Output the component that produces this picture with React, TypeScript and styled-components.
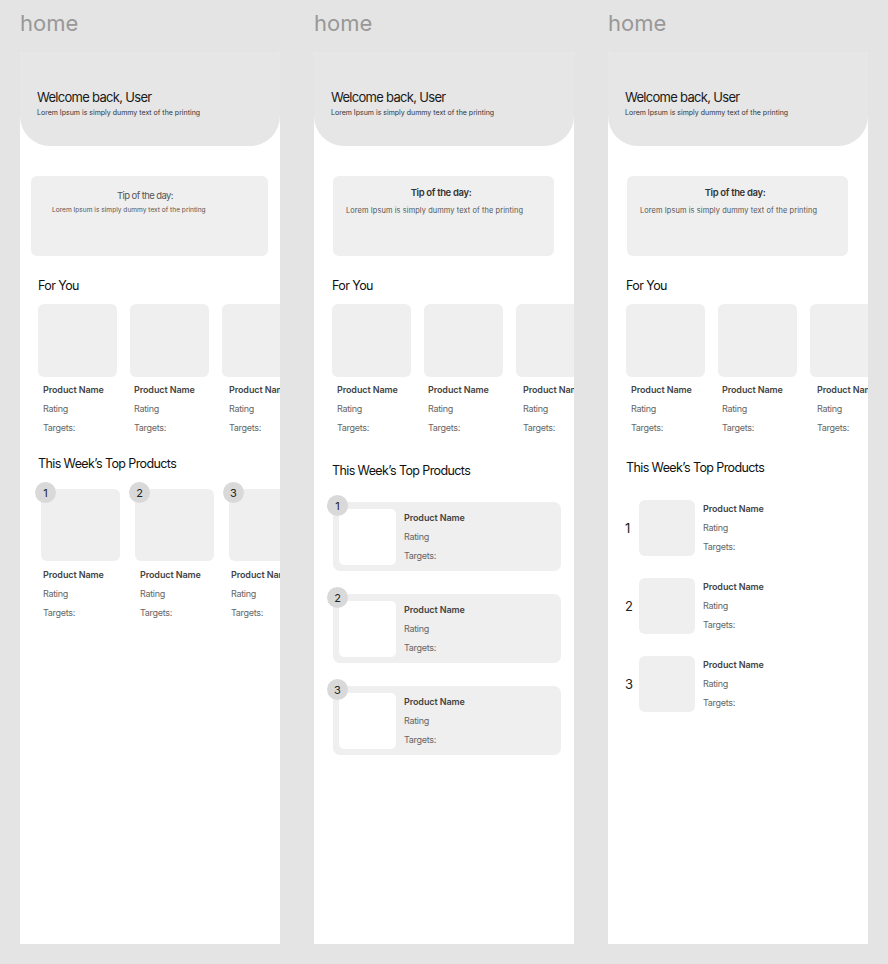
import React from 'react';
import styled, { createGlobalStyle } from 'styled-components';

type Variant = 'grid' | 'cards' | 'list';

const products = [
  { rank: 1, inset: 5 },
  { rank: 2, inset: 4 },
  { rank: 3, inset: 7 },
];

const GlobalStyle = createGlobalStyle`
  body {
    margin: 0;
    background: #e4e4e4;
    font-family: Inter, 'Noto Sans', sans-serif;
  }
`;

const Page = styled.div`
  display: flex;
  gap: 34px;
  padding: 0 20px;
`;

const Column = styled.div`
  display: flex;
  flex-direction: column;
  width: 260px;
`;

const Label = styled.div`
  height: 52px;
  box-sizing: border-box;
  padding-top: 10px;
  font-size: 22px;
  line-height: 27px;
  color: #989898;
`;

const Frame = styled.div`
  width: 260px;
  height: 892px;
  background: #fff;
  overflow: hidden;
  border-radius: 3px 3px 0 0;
`;

const Header = styled.header`
  height: 94px;
  box-sizing: border-box;
  padding: 37px 17px 0;
  background: #e6e6e6;
  border-radius: 0 0 30px 30px;
`;

const Welcome = styled.div`
  font-size: 13px;
  line-height: 16px;
  letter-spacing: -0.7px;
  color: #1a1a1a;
  margin-bottom: 3px;
`;

const Subtitle = styled.div`
  font-size: 7px;
  line-height: 9px;
  color: #333;
`;

const Tip = styled.div<{ $bold?: boolean }>`
  margin: 30px ${p => (p.$bold ? '20px' : '12px')} 0 ${p => (p.$bold ? '19px' : '11px')};
  height: 80px;
  box-sizing: border-box;
  padding-top: ${p => (p.$bold ? '11px' : '14px')};
  border-radius: 6px;
  background: #efefef;
`;

const TipTitle = styled.div<{ $bold?: boolean }>`
  text-align: center;
  padding-right: ${p => (p.$bold ? '5px' : '9px')};
  font-size: ${p => (p.$bold ? '9.5px' : '9.5px')};
  font-weight: ${p => (p.$bold ? 600 : 400)};
  letter-spacing: ${p => (p.$bold ? '-0.35px' : '-0.6px')};
  line-height: 12px;
  color: ${p => (p.$bold ? '#333' : '#555')};
`;

const TipBody = styled.div<{ $bold?: boolean }>`
  margin-top: ${p => (p.$bold ? '7px' : '4px')};
  padding-left: ${p => (p.$bold ? '13px' : '21px')};
  font-size: ${p => (p.$bold ? '7.4px' : '6.6px')};
  letter-spacing: ${p => (p.$bold ? '0.1px' : '0')};
  line-height: 9px;
  color: #555;
`;

const SectionTitle = styled.h2<{ $top: number }>`
  margin: ${p => p.$top}px 0 0 18px;
  font-size: 12.5px;
  line-height: 16px;
  letter-spacing: -0.6px;
  font-weight: 400;
  color: #111;
`;

const Row = styled.div<{ $top: number; $left: number; $gap: number }>`
  display: flex;
  gap: ${p => p.$gap}px;
  margin-top: ${p => p.$top}px;
  padding-left: ${p => p.$left}px;
`;

const Card = styled.div`
  position: relative;
  flex: 0 0 79px;
`;

const Thumb = styled.div<{ $h: number }>`
  height: ${p => p.$h}px;
  border-radius: 6px;
  background: #efefef;
`;

const Info = styled.div<{ $inset?: number; $top?: number }>`
  margin-top: ${p => p.$top ?? 3}px;
  padding-left: ${p => p.$inset ?? 0}px;
  white-space: nowrap;
`;

const Name = styled.div`
  font-size: 9px;
  line-height: 19px;
  font-weight: 600;
  letter-spacing: -0.1px;
  color: #444;
`;

const Meta = styled.div`
  font-size: 9px;
  line-height: 19px;
  letter-spacing: -0.3px;
  color: #666;
`;

const Badge = styled.div<{ $left: number; $top: number }>`
  position: absolute;
  left: ${p => p.$left}px;
  top: ${p => p.$top}px;
  width: 21px;
  height: 21px;
  border-radius: 50%;
  background: #d9d9d9;
  display: flex;
  align-items: center;
  justify-content: center;
  font-size: 11px;
  color: #222;
`;

const Stack = styled.div<{ $top: number; $gap: number }>`
  display: flex;
  flex-direction: column;
  gap: ${p => p.$gap}px;
  margin-top: ${p => p.$top}px;
`;

const RankCard = styled.div`
  position: relative;
  display: flex;
  height: 69px;
  box-sizing: border-box;
  margin: 0 13px 0 19px;
  padding: 7px 6px;
  border-radius: 7px;
  background: #efefef;
`;

const WhiteThumb = styled.div`
  width: 57px;
  height: 56px;
  border-radius: 5px;
  background: #fff;
`;

const ListRow = styled.div`
  display: flex;
  align-items: center;
  padding-left: 17px;
`;

const RankNumber = styled.div`
  width: 14px;
  font-size: 13px;
  color: #222;
`;

const SquareThumb = styled.div`
  width: 56px;
  height: 56px;
  border-radius: 6px;
  background: #efefef;
`;

const SideInfo = styled.div`
  align-self: flex-start;
  margin: -1px 0 0 8px;
  white-space: nowrap;
`;

function Details() {
  return <>
    <Name>Product Name</Name>
    <Meta>Rating</Meta>
    <Meta>Targets:</Meta>
  </>;
}

function TopProducts({ variant }: { variant: Variant }) {
  if (variant === 'grid') {
    return <>
      <SectionTitle $top={19}>This Week’s Top Products</SectionTitle>
      <Row $top={17} $left={21} $gap={15}>
        {products.map(p => (
          <Card key={p.rank}>
            <Badge $left={-6} $top={-7}>{p.rank}</Badge>
            <Thumb $h={72} />
            <Info $inset={p.rank === 2 ? 5 : 2} $top={4}><Details /></Info>
          </Card>
        ))}
      </Row>
    </>;
  }
  if (variant === 'cards') {
    return <>
      <SectionTitle $top={26}>This Week’s Top Products</SectionTitle>
      <Stack $top={23} $gap={23}>
        {products.map(p => (
          <RankCard key={p.rank}>
            <Badge $left={-6} $top={-7}>{p.rank}</Badge>
            <WhiteThumb />
            <SideInfo><Details /></SideInfo>
          </RankCard>
        ))}
      </Stack>
    </>;
  }
  return <>
    <SectionTitle $top={23}>This Week’s Top Products</SectionTitle>
    <Stack $top={24} $gap={22}>
      {products.map(p => (
        <ListRow key={p.rank}>
          <RankNumber>{p.rank}</RankNumber>
          <SquareThumb />
          <SideInfo><Details /></SideInfo>
        </ListRow>
      ))}
    </Stack>
  </>;
}

function HomeScreen({ variant }: { variant: Variant }) {
  const bold = variant !== 'grid';
  return <Column>
    <Label>home</Label>
    <Frame>
      <Header>
        <Welcome>Welcome back, User</Welcome>
        <Subtitle>Lorem Ipsum is simply dummy text of the printing</Subtitle>
      </Header>
      <Tip $bold={bold}>
        <TipTitle $bold={bold}>Tip of the day:</TipTitle>
        <TipBody $bold={bold}>Lorem Ipsum is simply dummy text of the printing</TipBody>
      </Tip>
      <SectionTitle $top={22}>For You</SectionTitle>
      <Row $top={10} $left={18} $gap={13}>
        {products.map(p => (
          <Card key={p.rank}>
            <Thumb $h={73} />
            <Info $inset={p.inset}><Details /></Info>
          </Card>
        ))}
      </Row>
      <TopProducts variant={variant} />
    </Frame>
  </Column>;
}

export default function App() {
  return <Page>
    <GlobalStyle />
    <HomeScreen variant="grid" />
    <HomeScreen variant="cards" />
    <HomeScreen variant="list" />
  </Page>;
}
